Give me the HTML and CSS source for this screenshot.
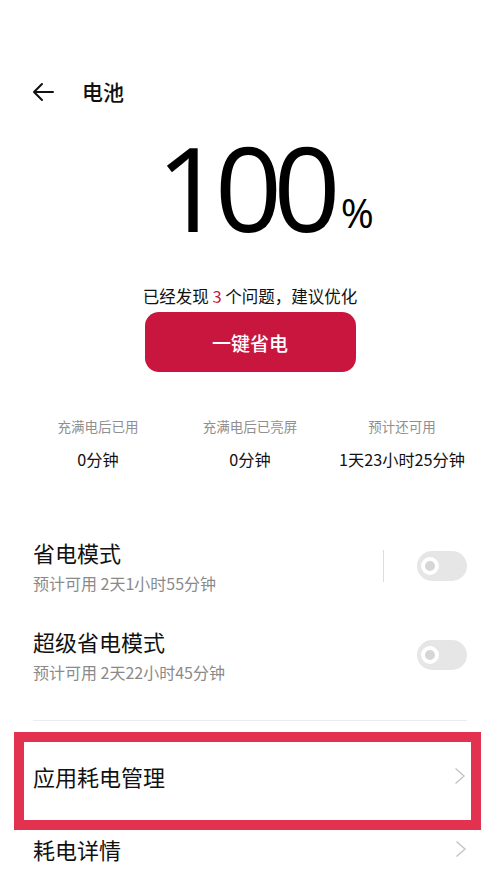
FILE: index.html
```html
<!DOCTYPE html>
<html lang="zh-CN">
<head>
    <meta charset="UTF-8">
    <meta name="viewport" content="width=device-width, initial-scale=1.0">
    <title>电池</title>
    <link rel="stylesheet" href="styles.css">
</head>
<body>
    <main class="page">
        <!--Header-->
        <div class="header">
            <svg class="back-icon" width="24" height="20" viewBox="0 0 24 20">
                <path d="M22 10H3M11 2L3 10L11 18" fill="none" stroke="#111" stroke-width="2" stroke-linecap="round" stroke-linejoin="round"/>
            </svg>
            <h1 class="header-title">电池</h1>
        </div>

        <!--Battery level-->
        <div class="level">
            <span class="level-number">100</span><span class="level-unit">%</span>
        </div>
        <p class="hint">已经发现 <span class="hint-count">3</span> 个问题，建议优化</p>
        <div class="action">
            <button class="save-button" type="button">一键省电</button>
        </div>

        <!--Stats-->
        <div class="stats">
            <div class="stat">
                <span class="stat-label">充满电后已用</span>
                <span class="stat-value">0分钟</span>
            </div>
            <div class="stat">
                <span class="stat-label">充满电后已亮屏</span>
                <span class="stat-value">0分钟</span>
            </div>
            <div class="stat">
                <span class="stat-label">预计还可用</span>
                <span class="stat-value">1天23小时25分钟</span>
            </div>
        </div>

        <!--Modes-->
        <div class="mode-row mode-first">
            <div class="mode-text">
                <span class="row-title">省电模式</span>
                <span class="row-sub">预计可用 2天1小时55分钟</span>
            </div>
            <div class="mode-control">
                <span class="mode-divider"></span>
                <span class="toggle"><span class="toggle-knob"></span></span>
            </div>
        </div>
        <div class="mode-row">
            <div class="mode-text">
                <span class="row-title">超级省电模式</span>
                <span class="row-sub">预计可用 2天22小时45分钟</span>
            </div>
            <div class="mode-control">
                <span class="toggle"><span class="toggle-knob"></span></span>
            </div>
        </div>

        <div class="separator"></div>

        <!--Links-->
        <div class="highlight">
            <div class="link-row link-boxed">
                <span class="row-title">应用耗电管理</span>
                <svg class="chevron" width="12" height="18" viewBox="0 0 12 18">
                    <path d="M1.5 1.5L10 9L1.5 16.5" fill="none" stroke="#c4c4c4" stroke-width="1.4"/>
                </svg>
            </div>
        </div>
        <div class="link-row link-last">
            <span class="row-title">耗电详情</span>
            <svg class="chevron" width="12" height="18" viewBox="0 0 12 18">
                <path d="M1.5 1.5L10 9L1.5 16.5" fill="none" stroke="#c4c4c4" stroke-width="1.4"/>
            </svg>
        </div>
    </main>
</body>
</html>
```

FILE: styles.css
```css
body {
    margin: 0;
    background-color: #ffffff;
    color: #111111;
    font-family: "Noto Sans CJK SC", "Noto Sans", sans-serif;
}
.page {
    width: 500px;
    height: 893px;
    overflow: hidden;
}
.header {
    display: flex;
    align-items: center;
    height: 44px;
    margin-top: 69px;
    padding-left: 31px;
}
.back-icon {
    display: block;
    margin-top: 2px;
}
.header-title {
    margin: 0 0 0 27px;
    font-size: 21px;
    font-weight: 500;
    line-height: 44px;
}
.level {
    display: flex;
    justify-content: center;
    align-items: baseline;
    height: 124px;
    margin-top: 12px;
    padding-left: 30px;
}
.level-number {
    font-family: "Open Sans", sans-serif;
    font-weight: 400;
    font-size: 118px;
    line-height: 124px;
    letter-spacing: -9px;
    color: #000000;
}
.level-unit {
    font-family: "Open Sans", sans-serif;
    font-weight: 400;
    font-size: 40px;
    margin-left: 9px;
    position: relative;
    top: -4px;
    color: #000000;
}
.hint {
    margin: 35px 0 0 0;
    text-align: center;
    font-size: 16.5px;
    line-height: 24px;
}
.hint-count {
    color: #c8163f;
}
.action {
    display: flex;
    justify-content: center;
    margin-top: 4px;
}
.save-button {
    width: 211px;
    height: 60px;
    border: none;
    border-radius: 14px;
    background-color: #c8163f;
    color: #ffffff;
    font-family: "Noto Sans CJK SC", sans-serif;
    font-size: 19px;
    font-weight: 500;
}
.stats {
    display: grid;
    grid-template-columns: repeat(3, 152px);
    justify-content: center;
    margin-top: 44px;
}
.stat {
    display: flex;
    flex-direction: column;
    align-items: center;
}
.stat-label {
    font-size: 13.5px;
    line-height: 20px;
    color: #8f8f8f;
}
.stat-value {
    margin-top: 11px;
    font-size: 16.2px;
    line-height: 24px;
    color: #111111;
}
.mode-row {
    display: flex;
    justify-content: space-between;
    align-items: center;
    padding: 0 33px;
    height: 89px;
}
.mode-first {
    margin-top: 50px;
}
.mode-text {
    display: flex;
    flex-direction: column;
}
.row-title {
    font-size: 22px;
    line-height: 30px;
    color: #111111;
}
.row-sub {
    font-size: 16px;
    line-height: 24px;
    color: #8a8a8a;
    margin-top: 4px;
}
.mode-control {
    display: flex;
    align-items: center;
}
.mode-divider {
    width: 1px;
    height: 32px;
    background-color: #dddddd;
    margin-right: 33px;
}
.toggle {
    display: flex;
    align-items: center;
    width: 50px;
    height: 30px;
    border-radius: 15px;
    background-color: #e6e6e6;
    padding-left: 4px;
    box-sizing: border-box;
}
.toggle-knob {
    width: 10px;
    height: 10px;
    border: 4px solid #ffffff;
    border-radius: 50%;
    background-color: #d6d6d6;
}
.separator {
    height: 1px;
    margin: 21px 33px 0 33px;
    background-color: #ececf0;
}
.highlight {
    margin: 11px 19px 0 14px;
    border: 10px solid #e2324f;
}
.link-row {
    display: flex;
    justify-content: space-between;
    align-items: center;
    padding: 0 33px;
}
.link-boxed {
    height: 68px;
    padding: 0 5px 10px 9px;
}
.link-last {
    height: 37px;
}
.chevron {
    display: block;
}
```
